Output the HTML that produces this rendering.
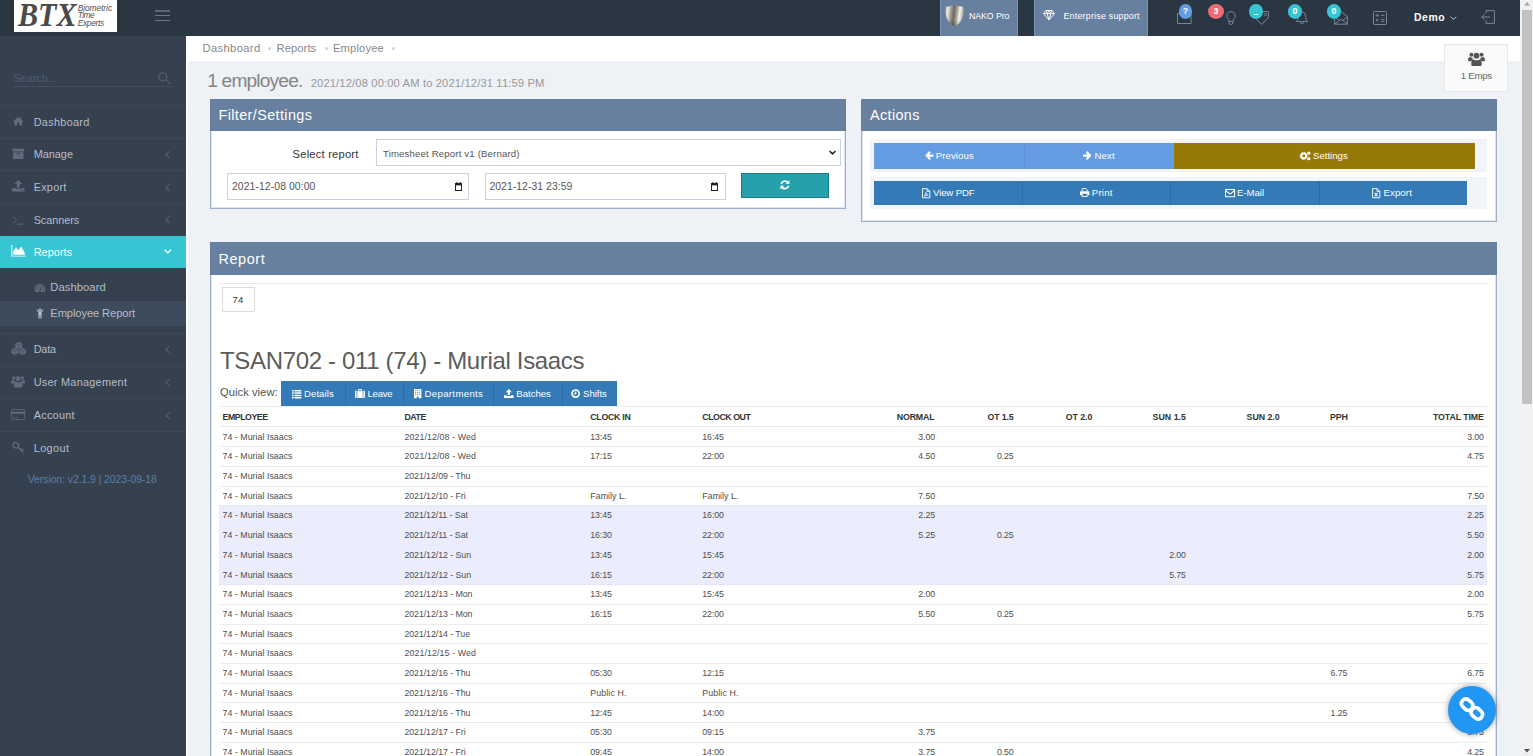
<!DOCTYPE html><html><head><meta charset="utf-8"><title>Employee Report</title><style>html,body{margin:0;padding:0;width:1533px;height:756px;overflow:hidden;background:#eef1f5}body{position:relative;font-family:"Liberation Sans",sans-serif}</style></head><body><div style="position:absolute;left:0px;top:0px;width:1533px;height:756px;background:#eef1f5;"></div><div style="position:absolute;left:186px;top:36px;width:1334px;height:25px;background:#fff;"></div><div style="position:absolute;left:186px;top:61px;width:2px;height:695px;background:#fff;"></div><div style="position:absolute;left:0px;top:36px;width:186px;height:720px;background:#364150;"></div><div style="position:absolute;left:0px;top:0px;width:1520px;height:36px;background:#2b3643;"></div><div style="position:absolute;left:14px;top:0px;width:103px;height:32px;background:#fff;"></div><span style='position:absolute;left:18px;top:-4.2px;font-family:"Liberation Serif",serif;font-weight:700;font-style:italic;font-size:34px;line-height:38px;color:#4a4a4a;white-space:pre;transform:scaleX(.885);transform-origin:0 0;'>BTX</span><span style='position:absolute;left:77.7px;top:2px;font-family:"Liberation Sans",sans-serif;font-size:8.4px;line-height:12px;color:#505050;white-space:pre;font-style:italic;letter-spacing:-0.064px;'>Biometric</span><span style='position:absolute;left:77.7px;top:9px;font-family:"Liberation Sans",sans-serif;font-size:8.4px;line-height:12px;color:#505050;white-space:pre;font-style:italic;letter-spacing:-0.56px;'>Time</span><span style='position:absolute;left:77.7px;top:17px;font-family:"Liberation Sans",sans-serif;font-size:8.4px;line-height:12px;color:#505050;white-space:pre;font-style:italic;letter-spacing:-0.301px;'>Experts</span><div style="position:absolute;left:155px;top:10px;width:15.4px;height:2px;background:#5b6878;"></div><div style="position:absolute;left:155px;top:15px;width:15.4px;height:1px;background:#6e7a89;"></div><div style="position:absolute;left:155px;top:20px;width:15.4px;height:1px;background:#6e7a89;"></div><span style='position:absolute;left:13px;top:71px;font-family:"Liberation Sans",sans-serif;font-size:11.2px;line-height:14px;color:#4e5c6f;white-space:pre;letter-spacing:-0.083px;'>Search...</span><div style="position:absolute;left:13px;top:86px;width:159px;height:1px;background:#435060;"></div><svg style="position:absolute;left:157.6px;top:72px;overflow:visible" width="12.4" height="12.4" viewBox="0 0 12.4 12.4"><circle cx="4.8" cy="4.8" r="4" fill="none" stroke="#4e5c6f" stroke-width="1.3"/><path stroke="#4e5c6f" stroke-width="1.3" d="M7.8 7.8 L12 12"/></svg><div style="position:absolute;left:0px;top:105px;width:186px;height:1px;background:#3d4957;"></div><span style='position:absolute;left:33.7px;top:115px;font-family:"Liberation Sans",sans-serif;font-size:10.9px;line-height:14px;color:#b4bcc8;white-space:pre;letter-spacing:0.297px;'>Dashboard</span><svg style="position:absolute;left:12.2px;top:115.8px;overflow:visible" width="12.6" height="10.2" viewBox="0 0 16 15"><path fill="#606c7d" d="M8 1.2 L15.6 8 L14.6 9.1 L13.6 8.3 V14 H9.6 V9.8 H6.4 V14 H2.4 V8.3 L1.4 9.1 L0.4 8 Z M11.4 2 H13.2 V4.4 L11.4 2.8Z"/></svg><div style="position:absolute;left:0px;top:138px;width:186px;height:1px;background:#3d4957;"></div><span style='position:absolute;left:33.7px;top:147px;font-family:"Liberation Sans",sans-serif;font-size:10.9px;line-height:14px;color:#b4bcc8;white-space:pre;letter-spacing:-0.02px;'>Manage</span><svg style="position:absolute;left:12.2px;top:147.6px;overflow:visible" width="12.6" height="11.8" viewBox="0 0 16 16"><path fill="#606c7d" d="M0 1 H16 V4.6 H0Z M1 5.6 H15 V15 H1Z"/><rect x="6" y="7.2" width="4" height="1.4" rx=".6" fill="#364150"/></svg><svg style="position:absolute;left:165.2px;top:150.9px;overflow:visible" width="5.4" height="7.2" viewBox="0 0 5.4 7.2"><path fill="none" stroke="#606c7d" stroke-width="1" d="M4.6 .4 L.8 3.6 L4.6 6.8"/></svg><div style="position:absolute;left:0px;top:170px;width:186px;height:1px;background:#3d4957;"></div><span style='position:absolute;left:33.7px;top:180px;font-family:"Liberation Sans",sans-serif;font-size:10.9px;line-height:14px;color:#b4bcc8;white-space:pre;letter-spacing:0.23px;'>Export</span><svg style="position:absolute;left:12.2px;top:180.4px;overflow:visible" width="12.6" height="11.4" viewBox="0 0 16 15"><path fill="#606c7d" d="M8 0 L13.2 5.4 H10 V10 H6 V5.4 H2.8Z M0 10.6 H4.6 V11.6 H11.4 V10.6 H16 V15 H0Z"/><rect x="11.6" y="12.6" width="1.3" height="1.1" fill="#364150"/><rect x="13.6" y="12.6" width="1.3" height="1.1" fill="#364150"/></svg><svg style="position:absolute;left:165.2px;top:183.79999999999998px;overflow:visible" width="5.4" height="7.2" viewBox="0 0 5.4 7.2"><path fill="none" stroke="#606c7d" stroke-width="1" d="M4.6 .4 L.8 3.6 L4.6 6.8"/></svg><div style="position:absolute;left:0px;top:203px;width:186px;height:1px;background:#3d4957;"></div><span style='position:absolute;left:33.7px;top:213px;font-family:"Liberation Sans",sans-serif;font-size:10.9px;line-height:14px;color:#b4bcc8;white-space:pre;letter-spacing:-0.08px;'>Scanners</span><svg style="position:absolute;left:12.4px;top:216px;overflow:visible" width="12.4" height="8.4" viewBox="0 0 16 11"><path fill="none" stroke="#606c7d" stroke-width="1.1" d="M1 1 L6 5.5 L1 10 M6.5 10.6 H15"/></svg><svg style="position:absolute;left:165.2px;top:216.4px;overflow:visible" width="5.4" height="7.2" viewBox="0 0 5.4 7.2"><path fill="none" stroke="#606c7d" stroke-width="1" d="M4.6 .4 L.8 3.6 L4.6 6.8"/></svg><div style="position:absolute;left:0px;top:236px;width:186px;height:32px;background:#36c6d3;"></div><span style='position:absolute;left:33.7px;top:245px;font-family:"Liberation Sans",sans-serif;font-size:10.9px;line-height:14px;color:#fff;white-space:pre;letter-spacing:0.052px;'>Reports</span><svg style="position:absolute;left:11px;top:245.2px;overflow:visible" width="15.2" height="11.6" viewBox="0 0 20 16"><path fill="#fff" d="M0 0 H1.3 V14.7 H20 V16 H0Z M2.6 13.4 V9 L6.4 3.2 L9.4 7.4 L13.6 2.2 L18.6 11 V13.4Z"/></svg><svg style="position:absolute;left:163.6px;top:248.8px;overflow:visible" width="7.6" height="4.6" viewBox="0 0 7.6 4.4"><path fill="none" stroke="#fff" stroke-width="1.3" d="M.6 .6 L3.8 3.8 L7 .6"/></svg><span style='position:absolute;left:50.3px;top:280px;font-family:"Liberation Sans",sans-serif;font-size:11.2px;line-height:14px;color:#b4bcc8;white-space:pre;letter-spacing:0.086px;'>Dashboard</span><svg style="position:absolute;left:34.2px;top:282.8px;overflow:visible" width="11.8" height="9.4" viewBox="0 0 16 13.5"><path fill="#606c7d" d="M8 1.5 A7.6 7.6 0 0 1 15.6 9.1 A7.6 7.6 0 0 1 14.4 13 H1.6 A7.6 7.6 0 0 1 0.4 9.1 A7.6 7.6 0 0 1 8 1.5Z"/><g fill="#364150"><circle cx="3" cy="9.2" r="1"/><circle cx="4.4" cy="5.6" r="1"/><circle cx="8" cy="4.2" r="1"/><circle cx="11.6" cy="5.6" r="1"/><circle cx="13" cy="9.2" r="1"/><path d="M7.3 11 L9.2 6 L10 6.3 L8.8 11.4Z"/><circle cx="8" cy="11.2" r="1.3"/></g></svg><div style="position:absolute;left:0px;top:301px;width:186px;height:25px;background:#3e4b5c;"></div><span style='position:absolute;left:50.3px;top:306px;font-family:"Liberation Sans",sans-serif;font-size:11.2px;line-height:14px;color:#b4bcc8;white-space:pre;letter-spacing:-0.116px;'>Employee Report</span><svg style="position:absolute;left:36px;top:308.4px;overflow:visible" width="8" height="10.8" viewBox="0 0 12 15"><circle cx="6" cy="2" r="1.9" fill="#b4bcc8"/><path fill="#b4bcc8" d="M0.6 2.4 L1.8 1.4 L4.4 4.4 H7.6 L10.2 1.4 L11.4 2.4 L8.4 6.2 V15 H6.5 V10.6 H5.5 V15 H3.6 V6.2Z"/></svg><div style="position:absolute;left:0px;top:333px;width:186px;height:1px;background:#3d4957;"></div><span style='position:absolute;left:33.7px;top:342px;font-family:"Liberation Sans",sans-serif;font-size:10.9px;line-height:14px;color:#b4bcc8;white-space:pre;letter-spacing:-0.182px;'>Data</span><svg style="position:absolute;left:10.2px;top:342.4px;overflow:visible" width="16.2" height="13" viewBox="0 0 18.4 14.6"><path fill="#606c7d" d="M10 0 L14 1.7 V6.2 L10 8 L6 6.2 V1.7Z"/><path fill="none" stroke="#364150" stroke-width=".7" d="M6.6 2.2 L10 3.7 L13.4 2.2 M10 3.7 V7.2"/><path fill="#606c7d" d="M5.6 6.6 L9.6 8.299999999999999 V12.8 L5.6 14.6 L1.6 12.8 V8.299999999999999Z"/><path fill="none" stroke="#364150" stroke-width=".7" d="M2.2 8.8 L5.6 10.3 L9.0 8.8 M5.6 10.3 V13.8"/><path fill="#606c7d" d="M14.4 6.6 L18.4 8.299999999999999 V12.8 L14.4 14.6 L10.4 12.8 V8.299999999999999Z"/><path fill="none" stroke="#364150" stroke-width=".7" d="M11.0 8.8 L14.4 10.3 L17.8 8.8 M14.4 10.3 V13.8"/></svg><svg style="position:absolute;left:165.2px;top:346.0px;overflow:visible" width="5.4" height="7.2" viewBox="0 0 5.4 7.2"><path fill="none" stroke="#606c7d" stroke-width="1" d="M4.6 .4 L.8 3.6 L4.6 6.8"/></svg><div style="position:absolute;left:0px;top:366px;width:186px;height:1px;background:#3d4957;"></div><span style='position:absolute;left:33.7px;top:375px;font-family:"Liberation Sans",sans-serif;font-size:10.9px;line-height:14px;color:#b4bcc8;white-space:pre;letter-spacing:0.26px;'>User Management</span><svg style="position:absolute;left:11.4px;top:375.2px;overflow:visible" width="14.2" height="12.8" viewBox="0 0 18 16"><g fill="#606c7d"><circle cx="3.6" cy="3.6" r="2.1"/><circle cx="14.4" cy="3.6" r="2.1"/><circle cx="9" cy="4.6" r="3.1"/><path d="M0 9.4 Q0 6 2.4 6 Q3.6 7 5 6.6 Q4.4 8 5.2 9.4 Q4 9.6 3.4 10.6 H1.4 Q0 10.6 0 9.4Z"/><path d="M18 9.4 Q18 6 15.6 6 Q14.4 7 13 6.6 Q13.6 8 12.8 9.4 Q14 9.6 14.6 10.6 H16.6 Q18 10.6 18 9.4Z"/><path d="M3.4 13.6 Q3.4 8.6 6 8.6 Q9 10.4 12 8.6 Q14.6 8.6 14.6 13.6 Q14.6 15.6 12.8 15.6 H5.2 Q3.4 15.6 3.4 13.6Z"/></g></svg><svg style="position:absolute;left:165.2px;top:379.0px;overflow:visible" width="5.4" height="7.2" viewBox="0 0 5.4 7.2"><path fill="none" stroke="#606c7d" stroke-width="1" d="M4.6 .4 L.8 3.6 L4.6 6.8"/></svg><div style="position:absolute;left:0px;top:398px;width:186px;height:1px;background:#3d4957;"></div><span style='position:absolute;left:33.7px;top:408px;font-family:"Liberation Sans",sans-serif;font-size:10.9px;line-height:14px;color:#b4bcc8;white-space:pre;letter-spacing:0.246px;'>Account</span><svg style="position:absolute;left:11.4px;top:408.6px;overflow:visible" width="14.2" height="11.2" viewBox="0 0 18 14"><rect x=".6" y=".6" width="16.8" height="12.8" rx="1.6" fill="none" stroke="#606c7d" stroke-width="1.1"/><rect x=".6" y="3.4" width="16.8" height="2.6" fill="#606c7d"/><path stroke="#606c7d" stroke-width="1" d="M3 10.6 H5 M6 10.6 H9"/></svg><svg style="position:absolute;left:165.2px;top:411.6px;overflow:visible" width="5.4" height="7.2" viewBox="0 0 5.4 7.2"><path fill="none" stroke="#606c7d" stroke-width="1" d="M4.6 .4 L.8 3.6 L4.6 6.8"/></svg><div style="position:absolute;left:0px;top:431px;width:186px;height:1px;background:#3d4957;"></div><span style='position:absolute;left:33.7px;top:441px;font-family:"Liberation Sans",sans-serif;font-size:10.9px;line-height:14px;color:#b4bcc8;white-space:pre;letter-spacing:0.383px;'>Logout</span><svg style="position:absolute;left:12px;top:442px;overflow:visible" width="12.2" height="11" viewBox="0 0 15 14"><ellipse cx="4.6" cy="4.2" rx="3.9" ry="3.3" transform="rotate(35 4.6 4.2)" fill="none" stroke="#68778c" stroke-width="1.3"/><path fill="none" stroke="#68778c" stroke-width="1.3" d="M7.2 6.6 L14.2 13.2 M12 11 L14 8.8 M10.4 9.6 L11.6 8.2"/></svg><span style='position:absolute;left:27.8px;top:473px;font-family:"Liberation Sans",sans-serif;font-size:10.4px;line-height:13px;color:#5c7ea8;white-space:pre;letter-spacing:-0.051px;'>Version: v2.1.9 | 2023-09-18</span><div style="position:absolute;left:940px;top:0px;width:78px;height:36px;background:#67809f;box-shadow:inset 1px 0 0 #7e93ad,inset -1px 0 0 #7e93ad;"></div><div style="position:absolute;left:1034px;top:0px;width:114.3px;height:36px;background:#67809f;box-shadow:inset 1px 0 0 #7e93ad,inset -1px 0 0 #7e93ad;"></div><svg style="position:absolute;left:944.8px;top:3.9px" width="19.2" height="23.4" viewBox="0 0 20 24"><defs><linearGradient id="sh" x1="0" x2="1" y1="0" y2="0.15"><stop offset="0" stop-color="#b9b5aa"/><stop offset=".16" stop-color="#efece2"/><stop offset=".32" stop-color="#a5a299"/><stop offset=".5" stop-color="#6e6b65"/><stop offset=".66" stop-color="#a29f96"/><stop offset=".82" stop-color="#f6f4ec"/><stop offset="1" stop-color="#b0ada3"/></linearGradient><linearGradient id="sv" x1="0" x2="0" y1="0" y2="1"><stop offset="0" stop-color="#000" stop-opacity="0"/><stop offset=".7" stop-color="#000" stop-opacity="0"/><stop offset="1" stop-color="#000" stop-opacity=".28"/></linearGradient></defs><path fill="url(#sh)" d="M10 .4 Q6 3 .8 2.6 Q0 12 3 17 Q6 21.6 10 23.6 Q14 21.6 17 17 Q20 12 19.2 2.6 Q14 3 10 .4Z"/><path fill="url(#sv)" d="M10 .4 Q6 3 .8 2.6 Q0 12 3 17 Q6 21.6 10 23.6 Q14 21.6 17 17 Q20 12 19.2 2.6 Q14 3 10 .4Z"/></svg><span style='position:absolute;left:969px;top:10px;font-family:"Liberation Sans",sans-serif;font-size:8.8px;line-height:12px;color:#fff;white-space:pre;letter-spacing:-0.082px;'>NAKO Pro</span><svg style="position:absolute;left:1042.8px;top:10.4px;overflow:visible" width="12" height="10.5" viewBox="0 0 12 10.5"><path fill="none" stroke="#fff" stroke-width=".9" stroke-linejoin="round" d="M3 .5 H9 L11.5 3.6 L6 10 L.5 3.6Z M.5 3.6 H11.5 M3 .5 L4.2 3.6 L6 .5 L7.8 3.6 L9 .5 M4.2 3.6 L6 10 L7.8 3.6"/></svg><span style='position:absolute;left:1063.5px;top:10px;font-family:"Liberation Sans",sans-serif;font-size:8.8px;line-height:12px;color:#fff;white-space:pre;letter-spacing:0.245px;'>Enterprise support</span><svg style="position:absolute;left:1177.3px;top:12.9px;overflow:visible" width="14.6" height="11" viewBox="0 0 14.5 11"><path fill="none" stroke="#79869a" stroke-width="1" d="M.5 .5 H14 V10.5 H.5Z"/></svg><svg style="position:absolute;left:1226px;top:11px;overflow:visible" width="10" height="14" viewBox="0 0 10 14"><path fill="none" stroke="#79869a" stroke-width="1" d="M5 .5 A4.4 4.4 0 0 1 7.2 8.6 V10.4 H2.8 V8.6 A4.4 4.4 0 0 1 5 .5Z M3 10.4 V12 Q3 13.4 5 13.4 Q7 13.4 7 12 V10.4"/></svg><svg style="position:absolute;left:1255.4px;top:10.8px;overflow:visible" width="14.2" height="14" viewBox="0 0 14.2 14"><path fill="none" stroke="#79869a" stroke-width="1" stroke-linejoin="round" d="M7.4 .6 H13.6 V6.6 L6.6 13.4 L.6 7.4Z"/><circle cx="10.6" cy="3.6" r="1.2" fill="none" stroke="#79869a" stroke-width=".9"/></svg><svg style="position:absolute;left:1295.6px;top:11px;overflow:visible" width="12" height="13.8" viewBox="0 0 12 13.8"><path fill="none" stroke="#79869a" stroke-width="1" stroke-linejoin="round" d="M6 .8 Q9.6 1.2 9.6 5.2 Q9.6 9 11.6 10.6 H.4 Q2.4 9 2.4 5.2 Q2.4 1.2 6 .8Z"/><path fill="none" stroke="#79869a" stroke-width="1" d="M4.4 11.2 A1.6 1.6 0 0 0 7.6 11.2"/></svg><svg style="position:absolute;left:1334px;top:11px;overflow:visible" width="14" height="13.8" viewBox="0 0 14 13.8"><path fill="none" stroke="#79869a" stroke-width="1" stroke-linejoin="round" d="M.6 5.6 L7 .6 L13.4 5.6 V13.2 H.6Z M.6 5.6 L5 9.4 M13.4 5.6 L9 9.4 M.6 13.2 L7 8.2 L13.4 13.2"/></svg><svg style="position:absolute;left:1373.2px;top:11.2px;overflow:visible" width="14" height="14" viewBox="0 0 14 14"><rect x=".5" y=".5" width="13" height="13" rx="1" fill="none" stroke="#79869a" stroke-width="1"/><path fill="none" stroke="#79869a" stroke-width="1" d="M2.6 4.4 H6 M4.3 2.7 V6.1 M8 4.4 H11.4 M3 8 L5.6 10.6 M5.6 8 L3 10.6 M8 8.4 H11.4 M8 10.4 H11.4"/></svg><svg style="position:absolute;left:1481.2px;top:10.4px;overflow:visible" width="14" height="14" viewBox="0 0 14 14"><path fill="none" stroke="#79869a" stroke-width="1" stroke-linejoin="round" d="M5 3.4 V.6 H13.4 V13.4 H5 V10.6 M9 7 H.8 M3.6 4.2 L.8 7 L3.6 9.8"/></svg><div style="position:absolute;left:1178.8px;top:4.2px;width:12.8px;height:14.4px;border-radius:50%;background:#659be0"></div><span style='position:absolute;left:1182.7px;top:5px;font-family:"Liberation Sans",sans-serif;font-size:8.8px;line-height:12px;color:#fff;white-space:pre;font-weight:700;'>?</span><div style="position:absolute;left:1208.2px;top:4.0px;width:15.6px;height:14.8px;border-radius:50%;background:#ed6b75"></div><span style='position:absolute;left:1213.5px;top:5px;font-family:"Liberation Sans",sans-serif;font-size:8.8px;line-height:12px;color:#fff;white-space:pre;font-weight:700;'>3</span><div style="position:absolute;left:1248.85px;top:4.0px;width:14.3px;height:14.8px;border-radius:50%;background:#36c6d3"></div><div style="position:absolute;left:1254.1px;top:13.6px;width:3.8px;height:1px;background:#e8fbfd;"></div><div style="position:absolute;left:1287.7px;top:3.9px;width:14.4px;height:15px;border-radius:50%;background:#36c6d3"></div><span style='position:absolute;left:1292.4px;top:5px;font-family:"Liberation Sans",sans-serif;font-size:8.8px;line-height:12px;color:#fff;white-space:pre;font-weight:700;'>0</span><div style="position:absolute;left:1326.9px;top:3.9px;width:14.4px;height:15px;border-radius:50%;background:#36c6d3"></div><span style='position:absolute;left:1331.6px;top:5px;font-family:"Liberation Sans",sans-serif;font-size:8.8px;line-height:12px;color:#fff;white-space:pre;font-weight:700;'>0</span><span style='position:absolute;left:1414px;top:11px;font-family:"Liberation Sans",sans-serif;font-size:10.4px;line-height:13px;color:#fff;white-space:pre;font-weight:700;letter-spacing:0.56px;'>Demo</span><svg style="position:absolute;left:1450.4px;top:15.6px;overflow:visible" width="6.6" height="4.2" viewBox="0 0 7.6 4.4"><path fill="none" stroke="#c6cfda" stroke-width="1.1" d="M.6 .6 L3.8 3.8 L7 .6"/></svg><div style="position:absolute;left:1520px;top:0px;width:13px;height:756px;background:#f1f1f1;"></div><div style="position:absolute;left:1522px;top:10px;width:10px;height:394px;background:#c1c1c1;"></div><svg style="position:absolute;left:1524px;top:1.6px;overflow:visible" width="6" height="3.4" viewBox="0 0 6 3.4"><path fill="#a3a3a3" d="M3 0 L6 3.4 H0Z"/></svg><svg style="position:absolute;left:1524px;top:749px;overflow:visible" width="6" height="3.4" viewBox="0 0 6 3.4"><path fill="#505050" d="M0 0 H6 L3 3.4Z"/></svg><span style='position:absolute;left:202.6px;top:41px;font-family:"Liberation Sans",sans-serif;font-size:11.2px;line-height:14px;color:#888;white-space:pre;letter-spacing:0.349px;'>Dashboard</span><span style='position:absolute;left:276.5px;top:41px;font-family:"Liberation Sans",sans-serif;font-size:11.2px;line-height:14px;color:#888;white-space:pre;letter-spacing:0.087px;'>Reports</span><span style='position:absolute;left:333px;top:41px;font-family:"Liberation Sans",sans-serif;font-size:11.2px;line-height:14px;color:#888;white-space:pre;letter-spacing:0.153px;'>Employee</span><div style="position:absolute;left:268.0px;top:46.6px;width:3px;height:3px;border-radius:50%;background:#d0d0d0"></div><div style="position:absolute;left:324.5px;top:46.6px;width:3px;height:3px;border-radius:50%;background:#d0d0d0"></div><div style="position:absolute;left:392.2px;top:46.6px;width:3px;height:3px;border-radius:50%;background:#d0d0d0"></div><div style="position:absolute;left:1444px;top:44px;width:64px;height:48px;background:#fafafa;border:1px solid #e7e7e7;box-sizing:border-box;"></div><svg style="position:absolute;left:1467.8px;top:51.4px;overflow:visible" width="17" height="15.8" viewBox="0 0 18 16"><g fill="#555"><circle cx="3.6" cy="3.6" r="2.1"/><circle cx="14.4" cy="3.6" r="2.1"/><circle cx="9" cy="4.6" r="3.1"/><path d="M0 9.4 Q0 6 2.4 6 Q3.6 7 5 6.6 Q4.4 8 5.2 9.4 Q4 9.6 3.4 10.6 H1.4 Q0 10.6 0 9.4Z"/><path d="M18 9.4 Q18 6 15.6 6 Q14.4 7 13 6.6 Q13.6 8 12.8 9.4 Q14 9.6 14.6 10.6 H16.6 Q18 10.6 18 9.4Z"/><path d="M3.4 13.6 Q3.4 8.6 6 8.6 Q9 10.4 12 8.6 Q14.6 8.6 14.6 13.6 Q14.6 15.6 12.8 15.6 H5.2 Q3.4 15.6 3.4 13.6Z"/></g></svg><span style='position:absolute;left:1460.8px;top:69px;font-family:"Liberation Sans",sans-serif;font-size:9.6px;line-height:13px;color:#666;white-space:pre;letter-spacing:-0.265px;'>1 Emps</span><span style='position:absolute;left:207.3px;top:69px;font-family:"Liberation Sans",sans-serif;font-size:19.2px;line-height:23px;color:#858585;white-space:pre;letter-spacing:-0.85px;'>1 employee.</span><span style='position:absolute;left:310.7px;top:76px;font-family:"Liberation Sans",sans-serif;font-size:11.2px;line-height:14px;color:#999;white-space:pre;letter-spacing:0.137px;'>2021/12/08 00:00 AM to 2021/12/31 11:59 PM</span><div style="position:absolute;left:210px;top:98.5px;width:635.6px;height:110px;background:#fff;box-sizing:border-box;border:1px solid #9fb0c7;box-shadow:inset 0 0 0 1px #dbe2ec;"></div><div style="position:absolute;left:210px;top:98.5px;width:635.6px;height:32.5px;background:#67809f;"></div><span style='position:absolute;left:218.5px;top:106px;font-family:"Liberation Sans",sans-serif;font-size:14.4px;line-height:18px;color:#fff;white-space:pre;letter-spacing:0.387px;'>Filter/Settings</span><div style="position:absolute;left:861.4px;top:98.5px;width:635.6px;height:123.6px;background:#fff;box-sizing:border-box;border:1px solid #9fb0c7;box-shadow:inset 0 0 0 1px #dbe2ec;"></div><div style="position:absolute;left:861.4px;top:98.5px;width:635.6px;height:32.5px;background:#67809f;"></div><span style='position:absolute;left:870px;top:106px;font-family:"Liberation Sans",sans-serif;font-size:14.4px;line-height:18px;color:#fff;white-space:pre;letter-spacing:0.367px;'>Actions</span><div style="position:absolute;left:210px;top:242px;width:1287px;height:520px;background:#fff;box-sizing:border-box;border:1px solid #9fb0c7;box-shadow:inset 0 0 0 1px #dbe2ec;"></div><div style="position:absolute;left:210px;top:242px;width:1287px;height:32.5px;background:#67809f;"></div><span style='position:absolute;left:218.5px;top:250px;font-family:"Liberation Sans",sans-serif;font-size:14.4px;line-height:18px;color:#fff;white-space:pre;letter-spacing:0.601px;'>Report</span><span style='position:absolute;left:292.6px;top:147px;font-family:"Liberation Sans",sans-serif;font-size:11.2px;line-height:14px;color:#333;white-space:pre;letter-spacing:0.198px;'>Select report</span><div style="position:absolute;left:376px;top:139.4px;width:464.5px;height:26.6px;background:#fff;box-sizing:border-box;border:1px solid #c9d1de;"></div><span style='position:absolute;left:383px;top:147px;font-family:"Liberation Sans",sans-serif;font-size:9.6px;line-height:13px;color:#555;white-space:pre;letter-spacing:0.165px;'>Timesheet Report v1 (Bernard)</span><svg style="position:absolute;left:829.2px;top:150.4px;overflow:visible" width="7" height="4.8" viewBox="0 0 7.6 4.4"><path fill="none" stroke="#222" stroke-width="1.6" d="M.6 .6 L3.8 3.8 L7 .6"/></svg><div style="position:absolute;left:227.3px;top:172.8px;width:241.4px;height:27px;background:#fff;box-sizing:border-box;border:1px solid #c9d1de;"></div><div style="position:absolute;left:484.8px;top:172.8px;width:240.8px;height:27px;background:#fff;box-sizing:border-box;border:1px solid #c9d1de;"></div><span style='position:absolute;left:231.9px;top:180px;font-family:"Liberation Sans",sans-serif;font-size:10.4px;line-height:13px;color:#555;white-space:pre;letter-spacing:0.096px;'>2021-12-08 00:00</span><span style='position:absolute;left:489.4px;top:180px;font-family:"Liberation Sans",sans-serif;font-size:10.4px;line-height:13px;color:#555;white-space:pre;letter-spacing:0.063px;'>2021-12-31 23:59</span><svg style="position:absolute;left:453.6px;top:181.6px;overflow:visible" width="9" height="9" viewBox="0 0 9 9"><path fill="#222" d="M1 1 H8 V9 H1Z"/><rect x="2" y="3.4" width="5" height="4.6" fill="#fff"/><path stroke="#222" stroke-width="1" d="M2.8 0 V2 M6.2 0 V2"/></svg><svg style="position:absolute;left:710.4px;top:181.6px;overflow:visible" width="9" height="9" viewBox="0 0 9 9"><path fill="#222" d="M1 1 H8 V9 H1Z"/><rect x="2" y="3.4" width="5" height="4.6" fill="#fff"/><path stroke="#222" stroke-width="1" d="M2.8 0 V2 M6.2 0 V2"/></svg><div style="position:absolute;left:741.4px;top:172.8px;width:87.2px;height:25.5px;background:#26a1ab;box-sizing:border-box;border:1px solid #157f89;"></div><svg style="position:absolute;left:780.2px;top:180.4px;overflow:visible" width="9.8" height="9.8" viewBox="0 0 10 10"><path fill="none" stroke="#fff" stroke-width="1.7" d="M1.2 4.2 A4 4 0 0 1 8 2.4 M8.8 5.8 A4 4 0 0 1 2 7.6"/><path fill="#fff" d="M9.6 .2 V4.2 H5.6Z M.4 9.8 V5.8 H4.4Z"/></svg><div style="position:absolute;left:870px;top:139px;width:617px;height:33.4px;background:#f1f4f8;"></div><div style="position:absolute;left:870px;top:177px;width:617px;height:32px;background:#f1f4f8;"></div><div style="position:absolute;left:874px;top:143px;width:150px;height:25.8px;background:#659be0;"></div><div style="position:absolute;left:1024px;top:143px;width:150px;height:25.8px;background:#659be0;box-shadow:inset 1px 0 0 #5f93d6;"></div><div style="position:absolute;left:1174px;top:143px;width:300.6px;height:25.8px;background:#967908;"></div><span style='position:absolute;left:935.7px;top:149px;font-family:"Liberation Sans",sans-serif;font-size:9.6px;line-height:13px;color:#fff;white-space:pre;letter-spacing:0.11px;'>Previous</span><svg style="position:absolute;left:925px;top:151px;overflow:visible" width="8.6" height="9.2" viewBox="0 0 9 10"><path fill="#fff" d="M0 5 L4.6 .1 L6.2 1.7 L4.2 3.7 H9 V6.3 H4.2 L6.2 8.3 L4.6 9.9Z"/></svg><span style='position:absolute;left:1094.4px;top:149px;font-family:"Liberation Sans",sans-serif;font-size:9.6px;line-height:13px;color:#fff;white-space:pre;letter-spacing:0.18px;'>Next</span><svg style="position:absolute;left:1083.2px;top:151px;overflow:visible" width="8.6" height="9.2" viewBox="0 0 9 10"><path fill="#fff" d="M9 5 L4.4 .1 L2.8 1.7 L4.8 3.7 H0 V6.3 H4.8 L2.8 8.3 L4.4 9.9Z"/></svg><span style='position:absolute;left:1313.1px;top:149px;font-family:"Liberation Sans",sans-serif;font-size:9.6px;line-height:13px;color:#fff;white-space:pre;letter-spacing:-0.01px;'>Settings</span><svg style="position:absolute;left:1300px;top:150.8px;overflow:visible" width="10.2" height="9.8" viewBox="0 0 10 10"><circle cx="3.6" cy="5" r="2.5" fill="none" stroke="#fff" stroke-width="2"/><circle cx="3.6" cy="5" r="3.6" fill="none" stroke="#fff" stroke-width="1" stroke-dasharray="1.4 1.4"/><circle cx="8.8" cy="2.2" r="1.1" fill="none" stroke="#fff" stroke-width="1.3"/><circle cx="8.8" cy="7.8" r="1.1" fill="none" stroke="#fff" stroke-width="1.3"/></svg><div style="position:absolute;left:874px;top:180.7px;width:592.8px;height:24.8px;background:#337ab7;"></div><div style="position:absolute;left:1022px;top:180.7px;width:1px;height:24.8px;background:#2e6da4;"></div><div style="position:absolute;left:1170px;top:180.7px;width:1px;height:24.8px;background:#2e6da4;"></div><div style="position:absolute;left:1319px;top:180.7px;width:1px;height:24.8px;background:#2e6da4;"></div><span style='position:absolute;left:933.1px;top:186px;font-family:"Liberation Sans",sans-serif;font-size:9.6px;line-height:13px;color:#fff;white-space:pre;letter-spacing:-0.145px;'>View PDF</span><svg style="position:absolute;left:922.2px;top:187.8px;overflow:visible" width="8.4" height="10.4" viewBox="0 0 9 11"><path fill="none" stroke="#fff" stroke-width="1" stroke-linejoin="round" d="M.6 .6 H5.6 L8.4 3.4 V10.4 H.6Z M5.4 .8 V3.6 H8.2"/><path fill="none" stroke="#fff" stroke-width=".8" d="M2.4 8.6 Q4 7 4.2 4.6 Q4 6.4 6.6 7.6 Q4 7.4 2.4 8.6Z"/></svg><span style='position:absolute;left:1091.8px;top:186px;font-family:"Liberation Sans",sans-serif;font-size:9.6px;line-height:13px;color:#fff;white-space:pre;letter-spacing:0.21px;'>Print</span><svg style="position:absolute;left:1080px;top:188.4px;overflow:visible" width="9.4" height="9" viewBox="0 0 10 9.6"><path fill="#fff" d="M0 4.2 Q0 3.4 .8 3.4 H9.2 Q10 3.4 10 4.2 V7.6 H8.2 V6 H1.8 V7.6 H0Z"/><path fill="none" stroke="#fff" stroke-width="1" d="M2.3 3.4 V.6 H6.4 L7.7 1.9 V3.4 M2.3 6.2 V9 H7.7 V6.2"/></svg><span style='position:absolute;left:1237px;top:186px;font-family:"Liberation Sans",sans-serif;font-size:9.6px;line-height:13px;color:#fff;white-space:pre;letter-spacing:-0.03px;'>E-Mail</span><svg style="position:absolute;left:1224.5px;top:189px;overflow:visible" width="10.2" height="8.4" viewBox="0 0 11 9"><path fill="none" stroke="#fff" stroke-width="1.1" stroke-linejoin="round" d="M.6 .6 H10.4 V8.4 H.6Z M.6 1.6 L5.5 5.4 L10.4 1.6"/></svg><span style='position:absolute;left:1383.4px;top:186px;font-family:"Liberation Sans",sans-serif;font-size:9.6px;line-height:13px;color:#fff;white-space:pre;letter-spacing:0.148px;'>Export</span><svg style="position:absolute;left:1372.2px;top:187.8px;overflow:visible" width="8.4" height="10.4" viewBox="0 0 9 11"><path fill="none" stroke="#fff" stroke-width="1" stroke-linejoin="round" d="M.6 .6 H5.6 L8.4 3.4 V10.4 H.6Z M5.4 .8 V3.6 H8.2"/><path fill="none" stroke="#fff" stroke-width="1.1" d="M2.8 5 L6 9 M6 5 L2.8 9"/></svg><div style="position:absolute;left:219.4px;top:283px;width:1268px;height:1px;background:#e7ecf1;"></div><div style="position:absolute;left:222px;top:287px;width:32.5px;height:25px;background:#fff;box-sizing:border-box;border:1px solid #dcdcdc;"></div><span style='position:absolute;left:232.61px;top:293px;font-family:"Liberation Sans",sans-serif;font-size:9.6px;line-height:13px;color:#333;white-space:pre;letter-spacing:0.035px;'>74</span><span style='position:absolute;left:220px;top:346px;font-family:"Liberation Sans",sans-serif;font-size:24px;line-height:29px;color:#5c5c5c;white-space:pre;letter-spacing:-0.339px;'>TSAN702 - 011 (74) - Murial Isaacs</span><span style='position:absolute;left:220px;top:385px;font-family:"Liberation Sans",sans-serif;font-size:11.2px;line-height:14px;color:#555;white-space:pre;letter-spacing:0.041px;'>Quick view:</span><div style="position:absolute;left:281px;top:381px;width:336.4px;height:24.7px;background:#337ab7;"></div><div style="position:absolute;left:345px;top:381px;width:1px;height:24.7px;background:#2e6da4;"></div><div style="position:absolute;left:403px;top:381px;width:1px;height:24.7px;background:#2e6da4;"></div><div style="position:absolute;left:493px;top:381px;width:1px;height:24.7px;background:#2e6da4;"></div><div style="position:absolute;left:562px;top:381px;width:1px;height:24.7px;background:#2e6da4;"></div><span style='position:absolute;left:304px;top:387px;font-family:"Liberation Sans",sans-serif;font-size:9.6px;line-height:13px;color:#fff;white-space:pre;letter-spacing:0.062px;'>Details</span><svg style="position:absolute;left:291.5px;top:389.6px;overflow:visible" width="9.4" height="8.6" viewBox="0 0 10 9.1"><path fill="#fff" d="M0 0 H1.8 V1.6 H0Z M2.6 0 H10 V1.6 H2.6Z M0 2.5 H1.8 V4.1 H0Z M2.6 2.5 H10 V4.1 H2.6Z M0 5 H1.8 V6.6 H0Z M2.6 5 H10 V6.6 H2.6Z M0 7.5 H1.8 V9.1 H0Z M2.6 7.5 H10 V9.1 H2.6Z"/></svg><span style='position:absolute;left:367.5px;top:387px;font-family:"Liberation Sans",sans-serif;font-size:9.6px;line-height:13px;color:#fff;white-space:pre;letter-spacing:-0.251px;'>Leave</span><svg style="position:absolute;left:354.6px;top:389px;overflow:visible" width="10" height="9" viewBox="0 0 10 9"><path fill="#fff" d="M0 2.6 Q0 1.8 .8 1.8 H1.6 V9 H.8 Q0 9 0 8.2Z M2.3 1.8 H7.7 V9 H2.3Z M8.4 1.8 H9.2 Q10 1.8 10 2.6 V8.2 Q10 9 9.2 9 H8.4Z"/><path fill="none" stroke="#fff" stroke-width=".9" d="M3.4 1.8 V.5 H6.6 V1.8"/></svg><span style='position:absolute;left:424.5px;top:387px;font-family:"Liberation Sans",sans-serif;font-size:9.6px;line-height:13px;color:#fff;white-space:pre;letter-spacing:0.348px;'>Departments</span><svg style="position:absolute;left:413.8px;top:388.8px;overflow:visible" width="7.4" height="9.4" viewBox="0 0 8 10"><path fill="#fff" d="M0 0 H8 V10 H5 V8 H3 V10 H0Z"/><g fill="#337ab7"><rect x="1.3" y="1.2" width="1" height="1"/><rect x="3.5" y="1.2" width="1" height="1"/><rect x="5.7" y="1.2" width="1" height="1"/><rect x="1.3" y="3.2" width="1" height="1"/><rect x="3.5" y="3.2" width="1" height="1"/><rect x="5.7" y="3.2" width="1" height="1"/><rect x="1.3" y="5.2" width="1" height="1"/><rect x="3.5" y="5.2" width="1" height="1"/><rect x="5.7" y="5.2" width="1" height="1"/></g></svg><span style='position:absolute;left:516.3px;top:387px;font-family:"Liberation Sans",sans-serif;font-size:9.6px;line-height:13px;color:#fff;white-space:pre;letter-spacing:-0.011px;'>Batches</span><svg style="position:absolute;left:504px;top:389px;overflow:visible" width="9.6" height="9" viewBox="0 0 10 9.4"><path fill="#fff" d="M5 0 L8.2 3.4 H6.2 V6.2 H3.8 V3.4 H1.8Z M0 6.6 H2.8 V7.4 H7.2 V6.6 H10 V9.4 H0Z"/></svg><span style='position:absolute;left:583px;top:387px;font-family:"Liberation Sans",sans-serif;font-size:9.6px;line-height:13px;color:#fff;white-space:pre;letter-spacing:-0.019px;'>Shifts</span><svg style="position:absolute;left:571.4px;top:389.4px;overflow:visible" width="9.2" height="9.2" viewBox="0 0 9.2 9.2"><circle cx="4.6" cy="4.6" r="3.6" fill="none" stroke="#fff" stroke-width="1.7"/><path fill="none" stroke="#fff" stroke-width="1.2" d="M4.7 2.4 V4.9 H3"/></svg><div style="position:absolute;left:219.3px;top:406px;width:1268.2px;height:1px;background:#e9edf2;"></div><div style="position:absolute;left:219.3px;top:504.90000000000003px;width:1268.2px;height:78.8px;background:#ebedfc;"></div><div style="position:absolute;left:219.3px;top:426px;width:1268.2px;height:1px;background:#e9edf2;"></div><div style="position:absolute;left:219.3px;top:446px;width:1268.2px;height:1px;background:#e9edf2;"></div><div style="position:absolute;left:219.3px;top:466px;width:1268.2px;height:1px;background:#e9edf2;"></div><div style="position:absolute;left:219.3px;top:486px;width:1268.2px;height:1px;background:#e9edf2;"></div><div style="position:absolute;left:219.3px;top:505px;width:1268.2px;height:1px;background:#e5e8f8;"></div><div style="position:absolute;left:219.3px;top:525px;width:1268.2px;height:1px;background:#e5e8f8;"></div><div style="position:absolute;left:219.3px;top:545px;width:1268.2px;height:1px;background:#e5e8f8;"></div><div style="position:absolute;left:219.3px;top:564px;width:1268.2px;height:1px;background:#e5e8f8;"></div><div style="position:absolute;left:219.3px;top:584px;width:1268.2px;height:1px;background:#e5e8f8;"></div><div style="position:absolute;left:219.3px;top:604px;width:1268.2px;height:1px;background:#e9edf2;"></div><div style="position:absolute;left:219.3px;top:624px;width:1268.2px;height:1px;background:#e9edf2;"></div><div style="position:absolute;left:219.3px;top:643px;width:1268.2px;height:1px;background:#e9edf2;"></div><div style="position:absolute;left:219.3px;top:663px;width:1268.2px;height:1px;background:#e9edf2;"></div><div style="position:absolute;left:219.3px;top:683px;width:1268.2px;height:1px;background:#e9edf2;"></div><div style="position:absolute;left:219.3px;top:702px;width:1268.2px;height:1px;background:#e9edf2;"></div><div style="position:absolute;left:219.3px;top:722px;width:1268.2px;height:1px;background:#e9edf2;"></div><div style="position:absolute;left:219.3px;top:742px;width:1268.2px;height:1px;background:#e9edf2;"></div><span style='position:absolute;left:222.6px;top:411px;font-family:"Liberation Sans",sans-serif;font-size:8.8px;line-height:12px;color:#333;white-space:pre;font-weight:700;letter-spacing:-0.488px;'>EMPLOYEE</span><span style='position:absolute;left:404.4px;top:411px;font-family:"Liberation Sans",sans-serif;font-size:8.8px;line-height:12px;color:#333;white-space:pre;font-weight:700;letter-spacing:-0.475px;'>DATE</span><span style='position:absolute;left:590.3px;top:411px;font-family:"Liberation Sans",sans-serif;font-size:8.8px;line-height:12px;color:#333;white-space:pre;font-weight:700;letter-spacing:-0.28px;'>CLOCK IN</span><span style='position:absolute;left:702.3px;top:411px;font-family:"Liberation Sans",sans-serif;font-size:8.8px;line-height:12px;color:#333;white-space:pre;font-weight:700;letter-spacing:-0.477px;'>CLOCK OUT</span><span style='position:absolute;left:896.8px;top:411px;font-family:"Liberation Sans",sans-serif;font-size:8.8px;line-height:12px;color:#333;white-space:pre;font-weight:700;letter-spacing:-0.166px;'>NORMAL</span><span style='position:absolute;left:987.5px;top:411px;font-family:"Liberation Sans",sans-serif;font-size:8.8px;line-height:12px;color:#333;white-space:pre;font-weight:700;letter-spacing:-0.139px;'>OT 1.5</span><span style='position:absolute;left:1065.8px;top:411px;font-family:"Liberation Sans",sans-serif;font-size:8.8px;line-height:12px;color:#333;white-space:pre;font-weight:700;letter-spacing:-0.079px;'>OT 2.0</span><span style='position:absolute;left:1152.6px;top:411px;font-family:"Liberation Sans",sans-serif;font-size:8.8px;line-height:12px;color:#333;white-space:pre;font-weight:700;letter-spacing:0.024px;'>SUN 1.5</span><span style='position:absolute;left:1246.6px;top:411px;font-family:"Liberation Sans",sans-serif;font-size:8.8px;line-height:12px;color:#333;white-space:pre;font-weight:700;letter-spacing:-0.026px;'>SUN 2.0</span><span style='position:absolute;left:1330.1px;top:411px;font-family:"Liberation Sans",sans-serif;font-size:8.8px;line-height:12px;color:#333;white-space:pre;font-weight:700;letter-spacing:-0.167px;'>PPH</span><span style='position:absolute;left:1433.0px;top:411px;font-family:"Liberation Sans",sans-serif;font-size:8.8px;line-height:12px;color:#333;white-space:pre;font-weight:700;letter-spacing:-0.11px;'>TOTAL TIME</span><span style='position:absolute;left:222.6px;top:431px;font-family:"Liberation Sans",sans-serif;font-size:8.8px;line-height:12px;color:#4e4e4e;white-space:pre;letter-spacing:0.028px;'>74 - Murial Isaacs</span><span style='position:absolute;left:404.4px;top:431px;font-family:"Liberation Sans",sans-serif;font-size:8.8px;line-height:12px;color:#4e4e4e;white-space:pre;letter-spacing:0.115px;'>2021/12/08 - Wed</span><span style='position:absolute;left:590.3px;top:431px;font-family:"Liberation Sans",sans-serif;font-size:8.8px;line-height:12px;color:#4e4e4e;white-space:pre;letter-spacing:-0.13px;'>13:45</span><span style='position:absolute;left:702.3px;top:431px;font-family:"Liberation Sans",sans-serif;font-size:8.8px;line-height:12px;color:#4e4e4e;white-space:pre;letter-spacing:-0.08px;'>16:45</span><span style='position:absolute;left:918.3px;top:431px;font-family:"Liberation Sans",sans-serif;font-size:8.8px;line-height:12px;color:#4e4e4e;white-space:pre;letter-spacing:-0.11px;'>3.00</span><span style='position:absolute;left:1467.2px;top:431px;font-family:"Liberation Sans",sans-serif;font-size:8.8px;line-height:12px;color:#4e4e4e;white-space:pre;letter-spacing:-0.11px;'>3.00</span><span style='position:absolute;left:222.6px;top:450px;font-family:"Liberation Sans",sans-serif;font-size:8.8px;line-height:12px;color:#4e4e4e;white-space:pre;letter-spacing:0.028px;'>74 - Murial Isaacs</span><span style='position:absolute;left:404.4px;top:450px;font-family:"Liberation Sans",sans-serif;font-size:8.8px;line-height:12px;color:#4e4e4e;white-space:pre;letter-spacing:0.115px;'>2021/12/08 - Wed</span><span style='position:absolute;left:590.3px;top:450px;font-family:"Liberation Sans",sans-serif;font-size:8.8px;line-height:12px;color:#4e4e4e;white-space:pre;letter-spacing:-0.13px;'>17:15</span><span style='position:absolute;left:702.3px;top:450px;font-family:"Liberation Sans",sans-serif;font-size:8.8px;line-height:12px;color:#4e4e4e;white-space:pre;letter-spacing:-0.08px;'>22:00</span><span style='position:absolute;left:918.3px;top:450px;font-family:"Liberation Sans",sans-serif;font-size:8.8px;line-height:12px;color:#4e4e4e;white-space:pre;letter-spacing:-0.11px;'>4.50</span><span style='position:absolute;left:996.9px;top:450px;font-family:"Liberation Sans",sans-serif;font-size:8.8px;line-height:12px;color:#4e4e4e;white-space:pre;letter-spacing:-0.11px;'>0.25</span><span style='position:absolute;left:1467.2px;top:450px;font-family:"Liberation Sans",sans-serif;font-size:8.8px;line-height:12px;color:#4e4e4e;white-space:pre;letter-spacing:-0.11px;'>4.75</span><span style='position:absolute;left:222.6px;top:470px;font-family:"Liberation Sans",sans-serif;font-size:8.8px;line-height:12px;color:#4e4e4e;white-space:pre;letter-spacing:0.028px;'>74 - Murial Isaacs</span><span style='position:absolute;left:404.4px;top:470px;font-family:"Liberation Sans",sans-serif;font-size:8.8px;line-height:12px;color:#4e4e4e;white-space:pre;letter-spacing:-0.057px;'>2021/12/09 - Thu</span><span style='position:absolute;left:222.6px;top:490px;font-family:"Liberation Sans",sans-serif;font-size:8.8px;line-height:12px;color:#4e4e4e;white-space:pre;letter-spacing:0.028px;'>74 - Murial Isaacs</span><span style='position:absolute;left:404.4px;top:490px;font-family:"Liberation Sans",sans-serif;font-size:8.8px;line-height:12px;color:#4e4e4e;white-space:pre;letter-spacing:-0.057px;'>2021/12/10 - Fri</span><span style='position:absolute;left:590.3px;top:490px;font-family:"Liberation Sans",sans-serif;font-size:8.8px;line-height:12px;color:#4e4e4e;white-space:pre;letter-spacing:0.045px;'>Family L.</span><span style='position:absolute;left:702.3px;top:490px;font-family:"Liberation Sans",sans-serif;font-size:8.8px;line-height:12px;color:#4e4e4e;white-space:pre;letter-spacing:0.045px;'>Family L.</span><span style='position:absolute;left:918.3px;top:490px;font-family:"Liberation Sans",sans-serif;font-size:8.8px;line-height:12px;color:#4e4e4e;white-space:pre;letter-spacing:-0.11px;'>7.50</span><span style='position:absolute;left:1467.2px;top:490px;font-family:"Liberation Sans",sans-serif;font-size:8.8px;line-height:12px;color:#4e4e4e;white-space:pre;letter-spacing:-0.11px;'>7.50</span><span style='position:absolute;left:222.6px;top:509px;font-family:"Liberation Sans",sans-serif;font-size:8.8px;line-height:12px;color:#4e4e4e;white-space:pre;letter-spacing:0.028px;'>74 - Murial Isaacs</span><span style='position:absolute;left:404.4px;top:509px;font-family:"Liberation Sans",sans-serif;font-size:8.8px;line-height:12px;color:#4e4e4e;white-space:pre;letter-spacing:-0.057px;'>2021/12/11 - Sat</span><span style='position:absolute;left:590.3px;top:509px;font-family:"Liberation Sans",sans-serif;font-size:8.8px;line-height:12px;color:#4e4e4e;white-space:pre;letter-spacing:-0.13px;'>13:45</span><span style='position:absolute;left:702.3px;top:509px;font-family:"Liberation Sans",sans-serif;font-size:8.8px;line-height:12px;color:#4e4e4e;white-space:pre;letter-spacing:-0.08px;'>16:00</span><span style='position:absolute;left:918.3px;top:509px;font-family:"Liberation Sans",sans-serif;font-size:8.8px;line-height:12px;color:#4e4e4e;white-space:pre;letter-spacing:-0.11px;'>2.25</span><span style='position:absolute;left:1467.2px;top:509px;font-family:"Liberation Sans",sans-serif;font-size:8.8px;line-height:12px;color:#4e4e4e;white-space:pre;letter-spacing:-0.11px;'>2.25</span><span style='position:absolute;left:222.6px;top:529px;font-family:"Liberation Sans",sans-serif;font-size:8.8px;line-height:12px;color:#4e4e4e;white-space:pre;letter-spacing:0.028px;'>74 - Murial Isaacs</span><span style='position:absolute;left:404.4px;top:529px;font-family:"Liberation Sans",sans-serif;font-size:8.8px;line-height:12px;color:#4e4e4e;white-space:pre;letter-spacing:-0.057px;'>2021/12/11 - Sat</span><span style='position:absolute;left:590.3px;top:529px;font-family:"Liberation Sans",sans-serif;font-size:8.8px;line-height:12px;color:#4e4e4e;white-space:pre;letter-spacing:-0.13px;'>16:30</span><span style='position:absolute;left:702.3px;top:529px;font-family:"Liberation Sans",sans-serif;font-size:8.8px;line-height:12px;color:#4e4e4e;white-space:pre;letter-spacing:-0.08px;'>22:00</span><span style='position:absolute;left:918.3px;top:529px;font-family:"Liberation Sans",sans-serif;font-size:8.8px;line-height:12px;color:#4e4e4e;white-space:pre;letter-spacing:-0.11px;'>5.25</span><span style='position:absolute;left:996.9px;top:529px;font-family:"Liberation Sans",sans-serif;font-size:8.8px;line-height:12px;color:#4e4e4e;white-space:pre;letter-spacing:-0.11px;'>0.25</span><span style='position:absolute;left:1467.2px;top:529px;font-family:"Liberation Sans",sans-serif;font-size:8.8px;line-height:12px;color:#4e4e4e;white-space:pre;letter-spacing:-0.11px;'>5.50</span><span style='position:absolute;left:222.6px;top:549px;font-family:"Liberation Sans",sans-serif;font-size:8.8px;line-height:12px;color:#4e4e4e;white-space:pre;letter-spacing:0.028px;'>74 - Murial Isaacs</span><span style='position:absolute;left:404.4px;top:549px;font-family:"Liberation Sans",sans-serif;font-size:8.8px;line-height:12px;color:#4e4e4e;white-space:pre;letter-spacing:-0.057px;'>2021/12/12 - Sun</span><span style='position:absolute;left:590.3px;top:549px;font-family:"Liberation Sans",sans-serif;font-size:8.8px;line-height:12px;color:#4e4e4e;white-space:pre;letter-spacing:-0.13px;'>13:45</span><span style='position:absolute;left:702.3px;top:549px;font-family:"Liberation Sans",sans-serif;font-size:8.8px;line-height:12px;color:#4e4e4e;white-space:pre;letter-spacing:-0.08px;'>15:45</span><span style='position:absolute;left:1169.2px;top:549px;font-family:"Liberation Sans",sans-serif;font-size:8.8px;line-height:12px;color:#4e4e4e;white-space:pre;letter-spacing:-0.11px;'>2.00</span><span style='position:absolute;left:1467.2px;top:549px;font-family:"Liberation Sans",sans-serif;font-size:8.8px;line-height:12px;color:#4e4e4e;white-space:pre;letter-spacing:-0.11px;'>2.00</span><span style='position:absolute;left:222.6px;top:569px;font-family:"Liberation Sans",sans-serif;font-size:8.8px;line-height:12px;color:#4e4e4e;white-space:pre;letter-spacing:0.028px;'>74 - Murial Isaacs</span><span style='position:absolute;left:404.4px;top:569px;font-family:"Liberation Sans",sans-serif;font-size:8.8px;line-height:12px;color:#4e4e4e;white-space:pre;letter-spacing:-0.057px;'>2021/12/12 - Sun</span><span style='position:absolute;left:590.3px;top:569px;font-family:"Liberation Sans",sans-serif;font-size:8.8px;line-height:12px;color:#4e4e4e;white-space:pre;letter-spacing:-0.13px;'>16:15</span><span style='position:absolute;left:702.3px;top:569px;font-family:"Liberation Sans",sans-serif;font-size:8.8px;line-height:12px;color:#4e4e4e;white-space:pre;letter-spacing:-0.08px;'>22:00</span><span style='position:absolute;left:1169.2px;top:569px;font-family:"Liberation Sans",sans-serif;font-size:8.8px;line-height:12px;color:#4e4e4e;white-space:pre;letter-spacing:-0.11px;'>5.75</span><span style='position:absolute;left:1467.2px;top:569px;font-family:"Liberation Sans",sans-serif;font-size:8.8px;line-height:12px;color:#4e4e4e;white-space:pre;letter-spacing:-0.11px;'>5.75</span><span style='position:absolute;left:222.6px;top:588px;font-family:"Liberation Sans",sans-serif;font-size:8.8px;line-height:12px;color:#4e4e4e;white-space:pre;letter-spacing:0.028px;'>74 - Murial Isaacs</span><span style='position:absolute;left:404.4px;top:588px;font-family:"Liberation Sans",sans-serif;font-size:8.8px;line-height:12px;color:#4e4e4e;white-space:pre;letter-spacing:-0.057px;'>2021/12/13 - Mon</span><span style='position:absolute;left:590.3px;top:588px;font-family:"Liberation Sans",sans-serif;font-size:8.8px;line-height:12px;color:#4e4e4e;white-space:pre;letter-spacing:-0.13px;'>13:45</span><span style='position:absolute;left:702.3px;top:588px;font-family:"Liberation Sans",sans-serif;font-size:8.8px;line-height:12px;color:#4e4e4e;white-space:pre;letter-spacing:-0.08px;'>15:45</span><span style='position:absolute;left:918.3px;top:588px;font-family:"Liberation Sans",sans-serif;font-size:8.8px;line-height:12px;color:#4e4e4e;white-space:pre;letter-spacing:-0.11px;'>2.00</span><span style='position:absolute;left:1467.2px;top:588px;font-family:"Liberation Sans",sans-serif;font-size:8.8px;line-height:12px;color:#4e4e4e;white-space:pre;letter-spacing:-0.11px;'>2.00</span><span style='position:absolute;left:222.6px;top:608px;font-family:"Liberation Sans",sans-serif;font-size:8.8px;line-height:12px;color:#4e4e4e;white-space:pre;letter-spacing:0.028px;'>74 - Murial Isaacs</span><span style='position:absolute;left:404.4px;top:608px;font-family:"Liberation Sans",sans-serif;font-size:8.8px;line-height:12px;color:#4e4e4e;white-space:pre;letter-spacing:-0.057px;'>2021/12/13 - Mon</span><span style='position:absolute;left:590.3px;top:608px;font-family:"Liberation Sans",sans-serif;font-size:8.8px;line-height:12px;color:#4e4e4e;white-space:pre;letter-spacing:-0.13px;'>16:15</span><span style='position:absolute;left:702.3px;top:608px;font-family:"Liberation Sans",sans-serif;font-size:8.8px;line-height:12px;color:#4e4e4e;white-space:pre;letter-spacing:-0.08px;'>22:00</span><span style='position:absolute;left:918.3px;top:608px;font-family:"Liberation Sans",sans-serif;font-size:8.8px;line-height:12px;color:#4e4e4e;white-space:pre;letter-spacing:-0.11px;'>5.50</span><span style='position:absolute;left:996.9px;top:608px;font-family:"Liberation Sans",sans-serif;font-size:8.8px;line-height:12px;color:#4e4e4e;white-space:pre;letter-spacing:-0.11px;'>0.25</span><span style='position:absolute;left:1467.2px;top:608px;font-family:"Liberation Sans",sans-serif;font-size:8.8px;line-height:12px;color:#4e4e4e;white-space:pre;letter-spacing:-0.11px;'>5.75</span><span style='position:absolute;left:222.6px;top:628px;font-family:"Liberation Sans",sans-serif;font-size:8.8px;line-height:12px;color:#4e4e4e;white-space:pre;letter-spacing:0.028px;'>74 - Murial Isaacs</span><span style='position:absolute;left:404.4px;top:628px;font-family:"Liberation Sans",sans-serif;font-size:8.8px;line-height:12px;color:#4e4e4e;white-space:pre;letter-spacing:-0.057px;'>2021/12/14 - Tue</span><span style='position:absolute;left:222.6px;top:647px;font-family:"Liberation Sans",sans-serif;font-size:8.8px;line-height:12px;color:#4e4e4e;white-space:pre;letter-spacing:0.028px;'>74 - Murial Isaacs</span><span style='position:absolute;left:404.4px;top:647px;font-family:"Liberation Sans",sans-serif;font-size:8.8px;line-height:12px;color:#4e4e4e;white-space:pre;letter-spacing:0.115px;'>2021/12/15 - Wed</span><span style='position:absolute;left:222.6px;top:667px;font-family:"Liberation Sans",sans-serif;font-size:8.8px;line-height:12px;color:#4e4e4e;white-space:pre;letter-spacing:0.028px;'>74 - Murial Isaacs</span><span style='position:absolute;left:404.4px;top:667px;font-family:"Liberation Sans",sans-serif;font-size:8.8px;line-height:12px;color:#4e4e4e;white-space:pre;letter-spacing:-0.057px;'>2021/12/16 - Thu</span><span style='position:absolute;left:590.3px;top:667px;font-family:"Liberation Sans",sans-serif;font-size:8.8px;line-height:12px;color:#4e4e4e;white-space:pre;letter-spacing:-0.13px;'>05:30</span><span style='position:absolute;left:702.3px;top:667px;font-family:"Liberation Sans",sans-serif;font-size:8.8px;line-height:12px;color:#4e4e4e;white-space:pre;letter-spacing:-0.08px;'>12:15</span><span style='position:absolute;left:1330.6px;top:667px;font-family:"Liberation Sans",sans-serif;font-size:8.8px;line-height:12px;color:#4e4e4e;white-space:pre;letter-spacing:-0.11px;'>6.75</span><span style='position:absolute;left:1467.2px;top:667px;font-family:"Liberation Sans",sans-serif;font-size:8.8px;line-height:12px;color:#4e4e4e;white-space:pre;letter-spacing:-0.11px;'>6.75</span><span style='position:absolute;left:222.6px;top:687px;font-family:"Liberation Sans",sans-serif;font-size:8.8px;line-height:12px;color:#4e4e4e;white-space:pre;letter-spacing:0.028px;'>74 - Murial Isaacs</span><span style='position:absolute;left:404.4px;top:687px;font-family:"Liberation Sans",sans-serif;font-size:8.8px;line-height:12px;color:#4e4e4e;white-space:pre;letter-spacing:-0.057px;'>2021/12/16 - Thu</span><span style='position:absolute;left:590.3px;top:687px;font-family:"Liberation Sans",sans-serif;font-size:8.8px;line-height:12px;color:#4e4e4e;white-space:pre;letter-spacing:0.105px;'>Public H.</span><span style='position:absolute;left:702.3px;top:687px;font-family:"Liberation Sans",sans-serif;font-size:8.8px;line-height:12px;color:#4e4e4e;white-space:pre;letter-spacing:0.105px;'>Public H.</span><span style='position:absolute;left:222.6px;top:707px;font-family:"Liberation Sans",sans-serif;font-size:8.8px;line-height:12px;color:#4e4e4e;white-space:pre;letter-spacing:0.028px;'>74 - Murial Isaacs</span><span style='position:absolute;left:404.4px;top:707px;font-family:"Liberation Sans",sans-serif;font-size:8.8px;line-height:12px;color:#4e4e4e;white-space:pre;letter-spacing:-0.057px;'>2021/12/16 - Thu</span><span style='position:absolute;left:590.3px;top:707px;font-family:"Liberation Sans",sans-serif;font-size:8.8px;line-height:12px;color:#4e4e4e;white-space:pre;letter-spacing:-0.13px;'>12:45</span><span style='position:absolute;left:702.3px;top:707px;font-family:"Liberation Sans",sans-serif;font-size:8.8px;line-height:12px;color:#4e4e4e;white-space:pre;letter-spacing:-0.08px;'>14:00</span><span style='position:absolute;left:1330.6px;top:707px;font-family:"Liberation Sans",sans-serif;font-size:8.8px;line-height:12px;color:#4e4e4e;white-space:pre;letter-spacing:-0.11px;'>1.25</span><span style='position:absolute;left:1467.2px;top:707px;font-family:"Liberation Sans",sans-serif;font-size:8.8px;line-height:12px;color:#4e4e4e;white-space:pre;letter-spacing:-0.11px;'>1.25</span><span style='position:absolute;left:222.6px;top:726px;font-family:"Liberation Sans",sans-serif;font-size:8.8px;line-height:12px;color:#4e4e4e;white-space:pre;letter-spacing:0.028px;'>74 - Murial Isaacs</span><span style='position:absolute;left:404.4px;top:726px;font-family:"Liberation Sans",sans-serif;font-size:8.8px;line-height:12px;color:#4e4e4e;white-space:pre;letter-spacing:-0.057px;'>2021/12/17 - Fri</span><span style='position:absolute;left:590.3px;top:726px;font-family:"Liberation Sans",sans-serif;font-size:8.8px;line-height:12px;color:#4e4e4e;white-space:pre;letter-spacing:-0.13px;'>05:30</span><span style='position:absolute;left:702.3px;top:726px;font-family:"Liberation Sans",sans-serif;font-size:8.8px;line-height:12px;color:#4e4e4e;white-space:pre;letter-spacing:-0.08px;'>09:15</span><span style='position:absolute;left:918.3px;top:726px;font-family:"Liberation Sans",sans-serif;font-size:8.8px;line-height:12px;color:#4e4e4e;white-space:pre;letter-spacing:-0.11px;'>3.75</span><span style='position:absolute;left:1467.2px;top:726px;font-family:"Liberation Sans",sans-serif;font-size:8.8px;line-height:12px;color:#4e4e4e;white-space:pre;letter-spacing:-0.11px;'>3.75</span><span style='position:absolute;left:222.6px;top:746px;font-family:"Liberation Sans",sans-serif;font-size:8.8px;line-height:12px;color:#4e4e4e;white-space:pre;letter-spacing:0.028px;'>74 - Murial Isaacs</span><span style='position:absolute;left:404.4px;top:746px;font-family:"Liberation Sans",sans-serif;font-size:8.8px;line-height:12px;color:#4e4e4e;white-space:pre;letter-spacing:-0.057px;'>2021/12/17 - Fri</span><span style='position:absolute;left:590.3px;top:746px;font-family:"Liberation Sans",sans-serif;font-size:8.8px;line-height:12px;color:#4e4e4e;white-space:pre;letter-spacing:-0.13px;'>09:45</span><span style='position:absolute;left:702.3px;top:746px;font-family:"Liberation Sans",sans-serif;font-size:8.8px;line-height:12px;color:#4e4e4e;white-space:pre;letter-spacing:-0.08px;'>14:00</span><span style='position:absolute;left:918.3px;top:746px;font-family:"Liberation Sans",sans-serif;font-size:8.8px;line-height:12px;color:#4e4e4e;white-space:pre;letter-spacing:-0.11px;'>3.75</span><span style='position:absolute;left:996.9px;top:746px;font-family:"Liberation Sans",sans-serif;font-size:8.8px;line-height:12px;color:#4e4e4e;white-space:pre;letter-spacing:-0.11px;'>0.50</span><span style='position:absolute;left:1467.2px;top:746px;font-family:"Liberation Sans",sans-serif;font-size:8.8px;line-height:12px;color:#4e4e4e;white-space:pre;letter-spacing:-0.11px;'>4.25</span><div style="position:absolute;left:1448px;top:685.6px;width:48px;height:48px;border-radius:50%;background:#2196f3;box-shadow:0 0 6px rgba(0,0,0,.38)"></div><svg style="position:absolute;left:1461px;top:698px;overflow:visible" width="22" height="22" viewBox="0 0 22 22"><g fill="none" stroke="#fff" stroke-width="3.7" transform="rotate(42 11 11)"><rect x="-1.6" y="6.5" width="12.2" height="9" rx="4.2"/><rect x="11.4" y="6.5" width="12.2" height="9" rx="4.2"/></g></svg></body></html>
